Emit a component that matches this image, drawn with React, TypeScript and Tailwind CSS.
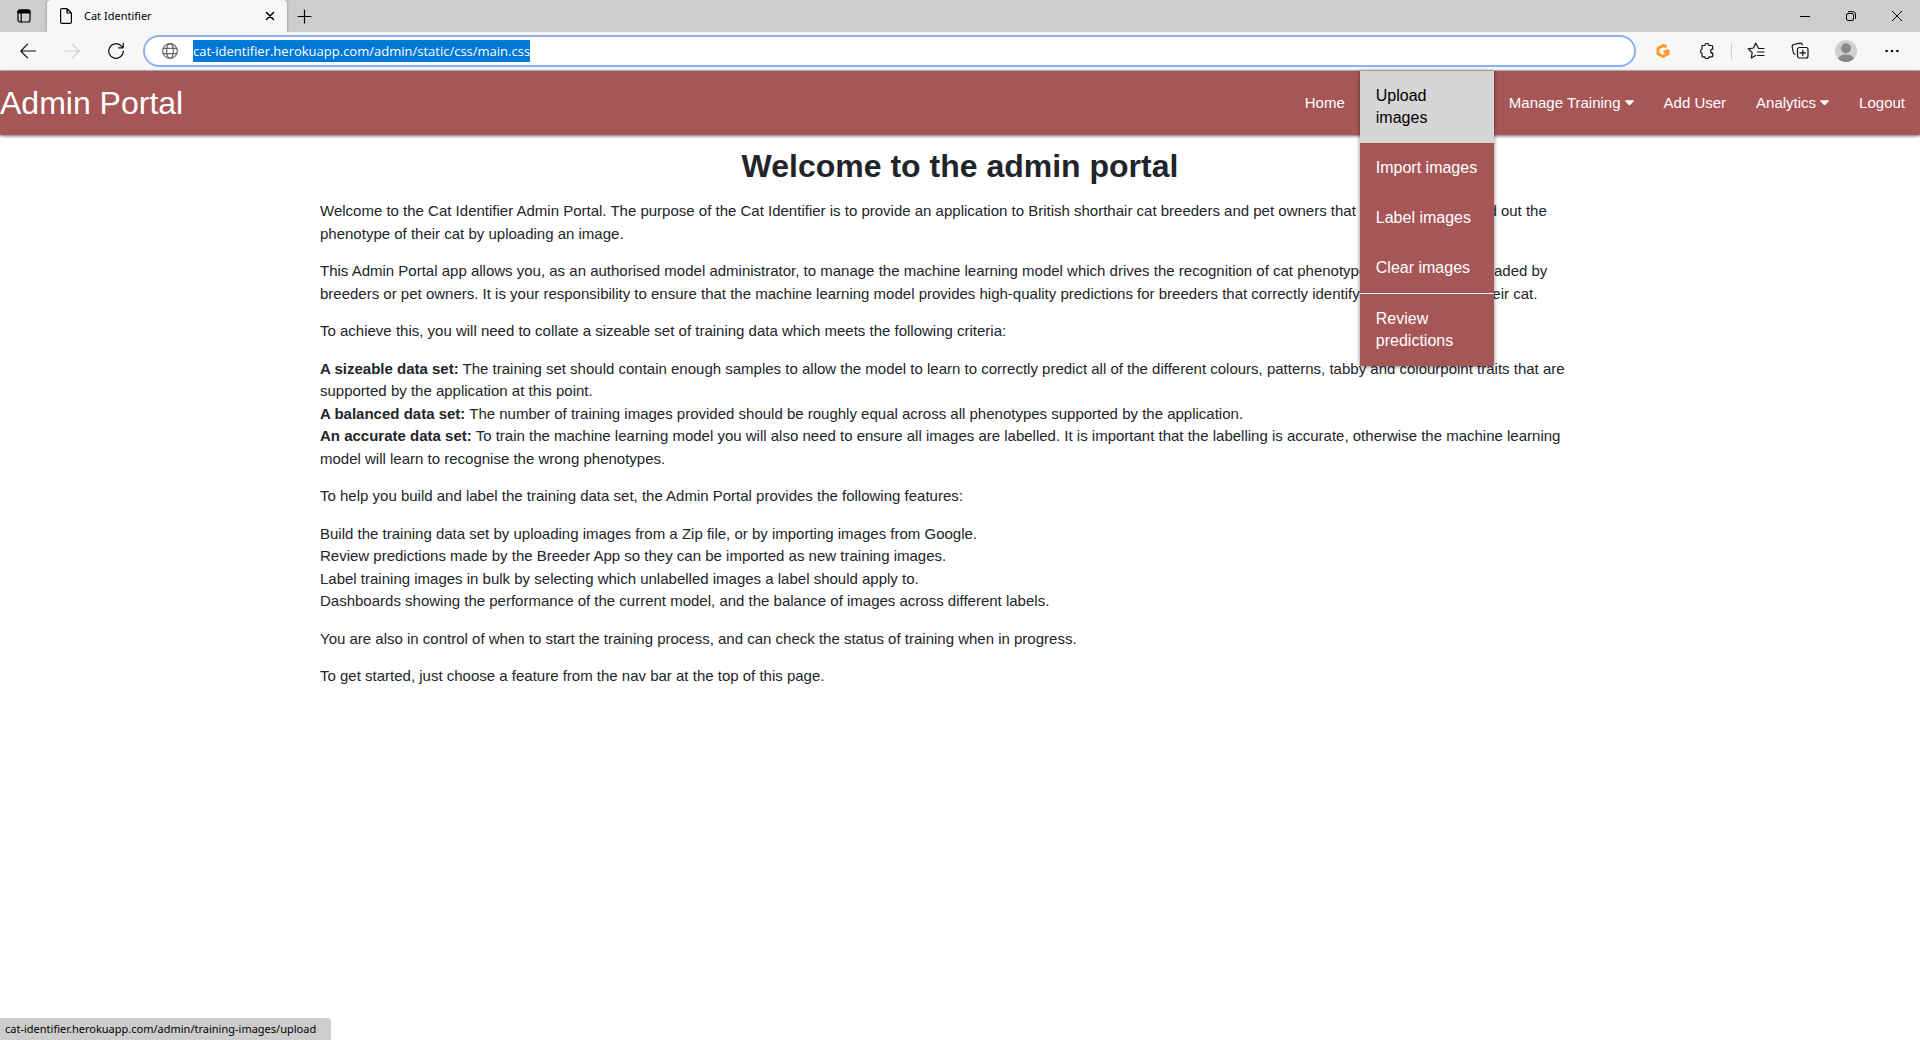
import React from "react";

type IconProps = { className?: string; children: React.ReactNode; size?: number };

function Icon({ className = "", children, size = 16 }: IconProps) {
  return (
    <svg
      width={size}
      height={size}
      viewBox={`0 0 ${size} ${size}`}
      fill="none"
      stroke="currentColor"
      strokeWidth="1.2"
      strokeLinecap="round"
      strokeLinejoin="round"
      className={className}
      aria-hidden="true"
    >
      {children}
    </svg>
  );
}

function IconButton({ label, className, children }: { label: string; className: string; children: React.ReactNode }) {
  return (
    <button type="button" aria-label={label} className={`flex h-8 shrink-0 items-center justify-center ${className}`}>
      {children}
    </button>
  );
}

function TabStrip() {
  return (
    <div className="flex h-8 items-center bg-[#cdcdcd] text-black">
      <IconButton label="Tab actions" className="w-[47px]">
        <Icon>
          <rect x="2" y="2" width="12" height="12" rx="2" />
          <path d="M2 3.5Q2 2 3.5 2h9Q14 2 14 3.5V5H2Z" fill="currentColor" />
          <path d="M5.2 5v9" />
        </Icon>
      </IconButton>
      <div className="flex h-8 w-60 items-center rounded-t bg-[#f7f7f7] pr-2 pl-[11px] shadow-[0_0_3px_rgba(0,0,0,0.35)]">
        <Icon className="shrink-0">
          <path d="M9 .6H4Q2.600.6 2.600 2v12q0 1.400 1.400 1.400h8q1.400 0 1.400-1.400V5ZM9 .6V5h4.400" />
        </Icon>
        <span className="ml-[10px] flex-1 font-['Noto_Sans','Open_Sans',sans-serif] text-[11px]">Cat Identifier</span>
        <button type="button" aria-label="Close tab" className="flex h-5 w-[18px] items-center justify-center">
          <Icon size={10}>
            <path d="M1.500 1.500l7 7M8.500 1.500l-7 7" strokeWidth="1.500" />
          </Icon>
        </button>
      </div>
      <IconButton label="New tab" className="w-[34px]">
        <Icon>
          <path d="M8.500 2v13M2 8.500h13" />
        </Icon>
      </IconButton>
      <div className="flex-1" />
      <IconButton label="Minimize" className="w-[46px]">
        <Icon size={10}>
          <path d="M0 5.500h10" strokeWidth="1" />
        </Icon>
      </IconButton>
      <IconButton label="Restore" className="w-[46px]">
        <Icon size={10}>
          <rect x=".5" y="2.500" width="7" height="7" rx="1.500" strokeWidth="1" />
          <path d="M2.500 .7h4.500q2.500 0 2.500 2.500v4.300" strokeWidth="1" />
        </Icon>
      </IconButton>
      <IconButton label="Close" className="w-[46px]">
        <Icon size={10}>
          <path d="M0 0l10 10M10 0L0 10" strokeWidth="1" />
        </Icon>
      </IconButton>
    </div>
  );
}

function Toolbar() {
  return (
    <div className="flex h-[39px] items-center border-b border-[#bdbdbd] bg-[#f7f7f7] pr-[6px] pl-[6px] text-[#111]">
      <IconButton label="Back" className="w-11">
        <Icon>
          <path d="M15.500 8H.8M7.500 1.200L.8 8l6.700 6.800" />
        </Icon>
      </IconButton>
      <IconButton label="Forward" className="w-11 text-[#cfcfcf]">
        <Icon>
          <path d="M.5 8h14.700M8.500 1.200L15.200 8l-6.700 6.800" />
        </Icon>
      </IconButton>
      <IconButton label="Refresh" className="w-11">
        <Icon size={18}>
          <path d="M16.300 9A7.300 7.300 0 1 1 14 3.700L16 5.700M16.200 1.200v4.600h-4.600" />
        </Icon>
      </IconButton>
      <div className="ml-[5px] flex h-8 flex-1 items-center rounded-full border-2 border-[#8fb1ea] bg-white pr-4 pl-[17px]">
        <Icon className="shrink-0 text-[#666]">
          <circle cx="8" cy="8" r="7.300" />
          <ellipse cx="8" cy="8" rx="3.400" ry="7.300" />
          <path d="M1.200 5.300h13.600M1.200 10.700h13.600" />
        </Icon>
        <input
          type="text"
          aria-label="Address"
          defaultValue="cat-identifier.herokuapp.com/admin/static/css/main.css"
          className="ml-[15px] h-[22px] field-sizing-content bg-[#0078d7] font-['Open_Sans','Noto_Sans',sans-serif] text-[13px] text-white outline-none"
        />
      </div>
      <IconButton label="Extension" className="ml-[5px] w-11">
        <svg width="14" height="14" viewBox="0 0 14 14" aria-hidden="true">
          <path
            d="M10.600 2.900L7.200 1.500 2 4.200v5.600l5 2.700 5-2.700V6.600L7.600 8.200"
            fill="none"
            stroke="#fb9727"
            strokeWidth="2.800"
            strokeLinejoin="round"
          />
        </svg>
      </IconButton>
      <IconButton label="Extensions" className="w-11">
        <Icon>
          <path d="M4 2.500h1.900a2 2 0 0 1 4 0h2.800q1 0 1 1v2.700a2 2 0 0 0 0 4v2.700q0 1-1 1H9.900a2 2 0 0 1-4 0H4q-1 0-1-1v-2.700a2.100 2.100 0 0 1 0-4V3.500q0-1 1-1Z" />
        </Icon>
      </IconButton>
      <div className="mx-[2px] h-4 w-px bg-[#cfcfcf]" />
      <IconButton label="Favorites" className="w-11">
        <Icon size={18}>
          <path d="M17 6.500h-5.300L8.700 1.200 6.500 6 1.200 6.800l4 3.800-.9 5.300L8.500 13.500M10.500 10h6.500M10.500 13.500h6.500" />
        </Icon>
      </IconButton>
      <IconButton label="Collections" className="w-11">
        <Icon size={18}>
          <path d="M4 12.500Q2.600 12 2.300 10.500L1.200 5Q.9 3 2.900 2.500L9 1.200q1.900-.3 2.500 1.500" />
          <rect x="6.500" y="5.500" width="10.500" height="10.500" rx="2" />
          <path d="M11.800 8v5.500M9 10.800h5.500" />
        </Icon>
      </IconButton>
      <IconButton label="Profile" className="w-12">
        <svg width="22" height="22" viewBox="0 0 22 22" aria-hidden="true">
          <circle cx="11" cy="11" r="11" fill="#d2d0ce" />
          <circle cx="11" cy="8.200" r="5" fill="#8a8886" />
          <path d="M3 18.500a8.500 6 0 0 1 16 0A11 11 0 0 1 3 18.500Z" fill="#8a8886" />
        </svg>
      </IconButton>
      <IconButton label="Settings and more" className="w-11">
        <svg width="14" height="4" viewBox="0 0 14 4" fill="#111" aria-hidden="true">
          <circle cx="1.600" cy="2" r="1.300" />
          <circle cx="7" cy="2" r="1.300" />
          <circle cx="12.400" cy="2" r="1.300" />
        </svg>
      </IconButton>
    </div>
  );
}

function Caret() {
  return (
    <svg width="9" height="6" viewBox="0 0 10 6" className="ml-1" fill="currentColor" aria-hidden="true">
      <path d="M1 0h8q1 .2.600 1L6 5Q5 6 4 5L.4 1Q0 .2 1 0Z" />
    </svg>
  );
}

const imageLinks = ["Import images", "Label images", "Clear images"];

function ImagesMenu() {
  return (
    <div className="relative w-[134px] self-stretch">
      <div className="absolute inset-x-0 top-0 z-10 bg-[#a65656] text-base leading-[22px] shadow-[0_1px_4px_rgba(0,0,0,0.5)]">
        <a href="#upload" className="block bg-[#d6d6d6] px-4 py-[14px] text-black">
          Upload images
        </a>
        {imageLinks.map((label) => (
          <a key={label} href="#images" className="block px-4 py-[14px] whitespace-nowrap">
            {label}
          </a>
        ))}
        <a href="#review" className="block border-t border-[#eee] px-4 py-[14px]">
          Review predictions
        </a>
      </div>
    </div>
  );
}

function NavBar() {
  return (
    <header className="flex h-16 items-center bg-[#a65656] text-white shadow-[0_1px_3px_rgba(0,0,0,0.6)]">
      <a href="#portal" className="text-[32px]">
        Admin Portal
      </a>
      <nav className="ml-auto flex h-full items-center text-[15px]">
        <a href="#home" className="px-[15px]">
          Home
        </a>
        <ImagesMenu />
        <button type="button" className="flex items-center px-[15px]">
          Manage Training
          <Caret />
        </button>
        <a href="#add-user" className="px-[15px]">
          Add User
        </a>
        <button type="button" className="flex items-center px-[15px]">
          Analytics
          <Caret />
        </button>
        <a href="#logout" className="px-[15px]">
          Logout
        </a>
      </nav>
    </header>
  );
}

function Content() {
  return (
    <main className="mx-auto w-2/3 pt-2 text-[15px] leading-normal text-[#212529]">
      <h1 className="mb-[11px] text-center text-[32px] leading-[46px] font-bold">Welcome to the admin portal</h1>
      <p className="mb-[15px]">
        Welcome to the Cat Identifier Admin Portal. The purpose of the Cat Identifier is to provide an application to
        British shorthair cat breeders and pet owners that are interested to find out the phenotype of their cat by
        uploading an image.
      </p>
      <p className="mb-[15px]">
        This Admin Portal app allows you, as an authorised model administrator, to manage the machine learning model
        which drives the recognition of cat phenotypes from images uploaded by breeders or pet owners. It is your
        responsibility to ensure that the machine learning model provides high-quality predictions for breeders that
        correctly identify the phenotype of their cat.
      </p>
      <p className="mb-[15px]">
        To achieve this, you will need to collate a sizeable set of training data which meets the following criteria:
      </p>
      <ul className="mb-[15px]">
        <li>
          <b>A sizeable data set:</b> The training set should contain enough samples to allow the model to learn to
          correctly predict all of the different colours, patterns, tabby and colourpoint traits that are supported by
          the application at this point.
        </li>
        <li>
          <b>A balanced data set:</b> The number of training images provided should be roughly equal across all
          phenotypes supported by the application.
        </li>
        <li>
          <b>An accurate data set:</b> To train the machine learning model you will also need to ensure all images are
          labelled. It is important that the labelling is accurate, otherwise the machine learning model will learn to
          recognise the wrong phenotypes.
        </li>
      </ul>
      <p className="mb-[15px]">
        To help you build and label the training data set, the Admin Portal provides the following features:
      </p>
      <ul className="mb-[15px]">
        <li>Build the training data set by uploading images from a Zip file, or by importing images from Google.</li>
        <li>Review predictions made by the Breeder App so they can be imported as new training images.</li>
        <li>Label training images in bulk by selecting which unlabelled images a label should apply to.</li>
        <li>Dashboards showing the performance of the current model, and the balance of images across different labels.</li>
      </ul>
      <p className="mb-[15px]">
        You are also in control of when to start the training process, and can check the status of training when in
        progress.
      </p>
      <p>To get started, just choose a feature from the nav bar at the top of this page.</p>
    </main>
  );
}

export default function App() {
  return (
    <div className="flex min-h-screen flex-col bg-white font-['Liberation_Sans',Arial,sans-serif]">
      <TabStrip />
      <Toolbar />
      <NavBar />
      <Content />
      <div className="mt-auto self-start rounded-tr bg-[#cdcdcd] pr-[15px] pl-[5px] font-['Noto_Sans','Open_Sans',sans-serif] text-[11px] leading-[22px] text-black">
        cat-identifier.herokuapp.com/admin/training-images/upload
      </div>
    </div>
  );
}
